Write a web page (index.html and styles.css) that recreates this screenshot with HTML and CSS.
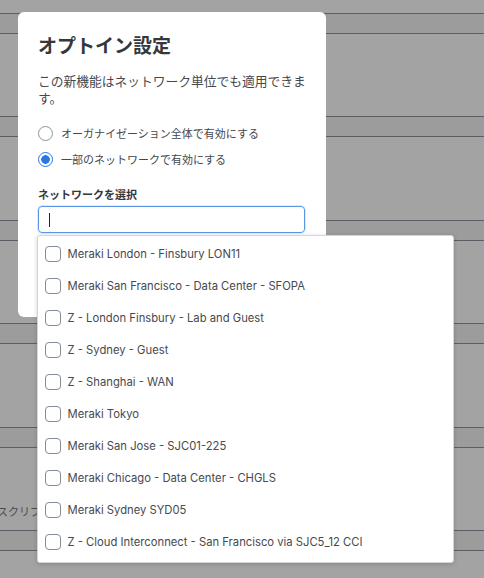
FILE: index.html
```html
<!DOCTYPE html>
<html lang="ja">
  <head>
    <meta charset="UTF-8" />
    <meta name="viewport" content="width=device-width, initial-scale=1.0" />
    <title>オプトイン設定</title>
    <link rel="stylesheet" href="styles.css">
  </head>
  <body>
    <!-- 背景のテーブル（オーバーレイで暗くなっている） -->
    <div class="page">
      <div class="row"><div class="band"></div><div class="body"></div></div>
      <div class="row"><div class="band"></div><div class="body"></div></div>
      <div class="row"><div class="band"></div><div class="body"></div></div>
      <div class="row"><div class="band"></div><div class="body"></div></div>
      <div class="row"><div class="band"></div><div class="body"><span class="bg-text">スクリプト</span></div></div>
      <div class="row"><div class="band"></div><div class="body"></div></div>
    </div>

    <div class="modal">
      <h1 class="title">オプトイン設定</h1>
      <p class="desc">この新機能はネットワーク単位でも適用できます。</p>

      <div class="radios">
        <label class="radio"><span class="circle"></span>オーガナイゼーション全体で有効にする</label>
        <label class="radio"><span class="circle on"></span>一部のネットワークで有効にする</label>
      </div>

      <div class="label">ネットワークを選択</div>
      <div class="field">
        <div class="input"></div>

        <ul class="dropdown">
          <li class="item"><span class="check"></span>Meraki London - Finsbury LON11</li>
          <li class="item"><span class="check"></span>Meraki San Francisco - Data Center - SFOPA</li>
          <li class="item"><span class="check"></span>Z - London Finsbury - Lab and Guest</li>
          <li class="item"><span class="check"></span>Z - Sydney - Guest</li>
          <li class="item"><span class="check"></span>Z - Shanghai - WAN</li>
          <li class="item"><span class="check"></span>Meraki Tokyo</li>
          <li class="item"><span class="check"></span>Meraki San Jose - SJC01-225</li>
          <li class="item"><span class="check"></span>Meraki Chicago - Data Center - CHGLS</li>
          <li class="item"><span class="check"></span>Meraki Sydney SYD05</li>
          <li class="item"><span class="check"></span>Z - Cloud Interconnect - San Francisco via SJC5_12 CCI</li>
        </ul>
      </div>
    </div>
  </body>
</html>
```

FILE: styles.css
```css
* {
  margin: 0;
  padding: 0;
  box-sizing: border-box;
}
html,
body {
  width: 484px;
  height: 578px;
  overflow: hidden;
}
body {
  position: relative;
  background-color: #a3a3a3;
  font-family: "Inter", "Noto Sans CJK JP", sans-serif;
  color: #3a3d42;
}

/* background table */
.page {
  padding-top: 13px;
}
.row {
  border-top: 1px solid #5a5f66;
}
.band {
  height: 20px;
  background-color: #9c9c9c;
  border-bottom: 1px solid #5a5f66;
}
.body {
  height: 82.4px;
  padding-top: 56px;
}
.bg-text {
  display: block;
  margin-left: -3px;
  font-size: 11px;
  line-height: 14px;
  color: #4a4c50;
  font-family: "Noto Sans CJK JP", sans-serif;
}

/* modal */
.modal {
  position: absolute;
  left: 18px;
  top: 12px;
  width: 308px;
  height: 305px;
  padding: 21px 20px 0;
  background-color: #fff;
  border-radius: 6px;
}
.title {
  font-family: "Noto Sans CJK JP", sans-serif;
  font-size: 19px;
  line-height: 24px;
  font-weight: 700;
  color: #34373c;
}
.desc {
  margin-top: 14.5px;
  font-family: "Noto Sans CJK JP", sans-serif;
  font-size: 12.75px;
  line-height: 17px;
  color: #45484d;
}
.radios {
  margin-top: 14.5px;
}
.radio {
  display: flex;
  align-items: center;
  height: 26px;
  font-family: "Noto Sans CJK JP", sans-serif;
  font-size: 11px;
  color: #45484d;
}
.circle {
  width: 15px;
  height: 15px;
  margin-right: 8px;
  border: 1.5px solid #8c939c;
  border-radius: 50%;
  flex: none;
}
.circle.on {
  border-color: #2a78e4;
  background: radial-gradient(circle, #2a78e4 0 4px, #fff 4.6px);
}
.label {
  margin-top: 14px;
  font-family: "Noto Sans CJK JP", sans-serif;
  font-size: 11px;
  line-height: 16px;
  font-weight: 700;
  color: #34373c;
}
.field {
  position: relative;
  margin-top: 4px;
}
.input {
  width: 267px;
  height: 27px;
  border: 1px solid #5b96e6;
  border-radius: 4px;
  box-shadow: 0 0 0 1px rgba(91, 150, 230, 0.2);
  padding: 6px 10px;
}
.input::before {
  content: "";
  display: block;
  width: 1px;
  height: 14px;
  background-color: #222;
}

/* dropdown list */
.dropdown {
  position: absolute;
  left: -1px;
  top: 29px;
  width: 417px;
  height: 328px;
  padding: 2px 0 0;
  list-style: none;
  background-color: #fff;
  border: 1px solid #d6d6d6;
  border-radius: 3px;
  box-shadow: 0 1px 4px rgba(0, 0, 0, 0.18);
}
.item {
  display: flex;
  align-items: center;
  height: 32px;
  padding-left: 7px;
  font-size: 11.25px;
  color: #46494e;
  white-space: nowrap;
}
.check {
  width: 15.5px;
  height: 15.5px;
  margin-right: 7px;
  border: 1.5px solid #838c98;
  border-radius: 4px;
  flex: none;
}
```
